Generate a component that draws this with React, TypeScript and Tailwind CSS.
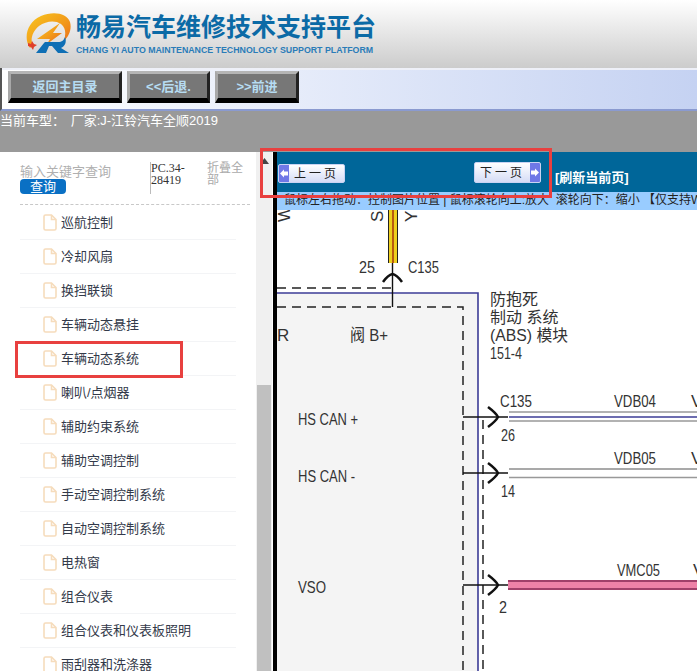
import React from "react";

const cjk = "font-['Liberation_Sans','Noto_Sans_CJK_SC',sans-serif]";

const menuItems = [
  "巡航控制",
  "冷却风扇",
  "换挡联锁",
  "车辆动态悬挂",
  "车辆动态系统",
  "喇叭/点烟器",
  "辅助约束系统",
  "辅助空调控制",
  "手动空调控制系统",
  "自动空调控制系统",
  "电热窗",
  "组合仪表",
  "组合仪表和仪表板照明",
  "雨刮器和洗涤器",
];

const Logo = () => (
  <svg width="50" height="42" viewBox="0 0 50 42" className="shrink-0">
    <defs>
      <linearGradient id="ring" x1="0" y1="0" x2="1" y2="1">
        <stop offset="0" stopColor="#f8c81e" />
        <stop offset="0.55" stopColor="#f29a1a" />
        <stop offset="1" stopColor="#e8641a" />
      </linearGradient>
    </defs>
    {/* swoosh ring */}
    <path d="M6 36C-1 26 3 10 17 4C29-1 43 1 46 10c2 7-1 14-6 19 2-7 2-13-3-17-6-4-15-3-22 2C8 20 6 28 9 33z" fill="url(#ring)" />
    {/* bolt */}
    <path d="M13 27L36 11l-7 10h9L23 32l3-5z" fill="url(#ring)" />
    <path d="M4 31l3 1 1-3 2 3 3 1-3 2-1 3-2-3-3-1z" fill="#e0402a" />
    {/* blue mark */}
    <path d="M21 30h13c4 0 6-2 7-5 2 5 0 9-4 11l8 5H34l-6-7-3 0-3 7H12l8-10z" fill="#0f6fb5" />
  </svg>
);

const FileIcon = () => (
  <svg width="14" height="17" viewBox="0 0 14 17" className="shrink-0" fill="none" stroke="#f6dcbc" strokeWidth="1.6">
    <path d="M2.5 1h6l4.5 4.5V14.5a1.5 1.5 0 0 1-1.5 1.5h-9A1.5 1.5 0 0 1 1 14.5V2.5A1.5 1.5 0 0 1 2.5 1z" />
    <path d="M8.5 1v4.5H13" />
  </svg>
);

const NavButton = ({ label, width }: { label: string; width: string }) => (
  <button
    className={`${width} h-[32px] bg-[#777777] border-t-[3px] border-l-[3px] border-b-[5px] border-r-[3px] border-t-[#b5b5b5] border-l-[#a8a8a8] border-b-black border-r-[#222222] text-[13px] font-bold text-[#b6dcf2] leading-none`}
  >
    {label}
  </button>
);

const Arrow = ({ dir }: { dir: "left" | "right" }) => (
  <span className="w-[10px] self-stretch bg-[#6f78e6] flex items-center justify-center">
    <svg width="8" height="9" viewBox="0 0 8 9" fill="#fff">
      {dir === "left" ? <path d="M0 4.5L4 .5v2h4v4H4v2z" /> : <path d="M8 4.5L4 .5v2H0v4h4v2z" />}
    </svg>
  </span>
);

const PageButton = ({ label, dir, className }: { label: string; dir: "left" | "right"; className: string }) => (
  <button
    className={`${className} w-[67px] flex items-center rounded-[2px] border border-[#c9d3f3] bg-gradient-to-b from-white to-[#d5dcf6] text-[12px] text-[#222] overflow-hidden`}
  >
    {dir === "left" && <Arrow dir="left" />}
    <span className="flex-1 tracking-[3px] text-center">{label}</span>
    {dir === "right" && <Arrow dir="right" />}
  </button>
);

const Chevron = ({ x, y }: { x: number; y: number }) => (
  <path d={`M${x} ${y - 10}q8 6 10 10q-2 4-10 10`} fill="none" stroke="#111" strokeWidth="2.5" />
);

// wiring diagram, coordinates are the page's own
const Diagram = () => {
  const narrow = { fontFamily: "'Liberation Sans','Noto Sans CJK SC',sans-serif", fill: "#333" };
  return (
    <svg width="420" height="461" viewBox="277 210 420 461" className="block bg-white" style={narrow}>
      <rect x="277" y="293" width="201" height="378" fill="#f4f4f4" />
      <path d="M277 293H478V671" fill="none" stroke="#3c3c96" strokeWidth="1.6" />
      <path d="M277 288H392" stroke="#222" strokeWidth="1.5" strokeDasharray="9 6" />
      <path d="M277 307H463V671" fill="none" stroke="#222" strokeWidth="1.5" strokeDasharray="9 6" />
      <path d="M483 420V671" stroke="#222" strokeWidth="1.5" strokeDasharray="9 6" />

      {/* top wire */}
      <rect x="388" y="210" width="10" height="53" fill="#222" />
      <rect x="389" y="210" width="8" height="53" fill="#eecf1e" />
      <rect x="392" y="210" width="2" height="53" fill="#b85a10" />
      <path d="M392.5 263V307" stroke="#111" strokeWidth="1.4" />
      <path d="M383 282q5-7 9.500-8q4.500 1 9.500 8" fill="none" stroke="#111" strokeWidth="2.500" />
      <text x="359" y="273" fontSize="17" textLength="16" lengthAdjust="spacingAndGlyphs">25</text>
      <text x="408" y="273" fontSize="17" textLength="31" lengthAdjust="spacingAndGlyphs">C135</text>
      <text transform="translate(290 222) rotate(-90)" fontSize="17">W</text>
      <text transform="translate(383 222) rotate(-90)" fontSize="17">S</text>
      <text transform="translate(417 222) rotate(-90)" fontSize="17">Y</text>

      <text x="490" y="305" fontSize="16">防抱死</text>
      <text x="490" y="323" fontSize="16">制动 系统</text>
      <text x="490" y="341" fontSize="16" textLength="78" lengthAdjust="spacingAndGlyphs">(ABS) 模块</text>
      <text x="490" y="359" fontSize="17" textLength="32" lengthAdjust="spacingAndGlyphs">151-4</text>

      <text x="277" y="341" fontSize="17">R</text>
      <text x="350" y="341" fontSize="17" textLength="38" lengthAdjust="spacingAndGlyphs">阀 B+</text>
      <text x="298" y="425" fontSize="17" textLength="60" lengthAdjust="spacingAndGlyphs">HS CAN +</text>
      <text x="298" y="482" fontSize="17" textLength="57" lengthAdjust="spacingAndGlyphs">HS CAN -</text>
      <text x="298" y="593" fontSize="17" textLength="28" lengthAdjust="spacingAndGlyphs">VSO</text>

      {/* HS CAN + */}
      <path d="M463 417H508" stroke="#111" strokeWidth="1.300" />
      <Chevron x={488} y={417} />
      <path d="M509 412H697M509 421H697" stroke="#999" strokeWidth="1.500" />
      <path d="M509 417H697" stroke="#3c3c96" strokeWidth="1.600" />
      <text x="500" y="407" fontSize="17" textLength="32" lengthAdjust="spacingAndGlyphs">C135</text>
      <text x="501" y="441" fontSize="17" textLength="14" lengthAdjust="spacingAndGlyphs">26</text>
      <text x="614" y="407" fontSize="17" textLength="42" lengthAdjust="spacingAndGlyphs">VDB04</text>
      <text x="691" y="407" fontSize="17">V</text>

      {/* HS CAN - */}
      <path d="M463 473H508" stroke="#111" strokeWidth="1.300" />
      <Chevron x={488} y={473} />
      <path d="M509 469H697" stroke="#555" strokeWidth="1.200" />
      <path d="M509 477.500H697" stroke="#999" strokeWidth="1.500" />
      <text x="501" y="497" fontSize="17" textLength="14" lengthAdjust="spacingAndGlyphs">14</text>
      <text x="614" y="464" fontSize="17" textLength="42" lengthAdjust="spacingAndGlyphs">VDB05</text>
      <text x="691" y="464" fontSize="17">V</text>

      {/* VSO */}
      <path d="M463 585H508" stroke="#111" strokeWidth="1.300" />
      <Chevron x={488} y={585} />
      <rect x="508" y="580" width="189" height="10" fill="#a0406a" />
      <rect x="508" y="582" width="189" height="6" fill="#ee82a8" />
      <text x="499" y="613" fontSize="17" textLength="8" lengthAdjust="spacingAndGlyphs">2</text>
      <text x="617" y="576" fontSize="17" textLength="43" lengthAdjust="spacingAndGlyphs">VMC05</text>
      <text x="693" y="576" fontSize="17">V</text>
    </svg>
  );
};

export default function App() {
  return (
    <div className={`${cjk} relative w-[697px] h-[671px] overflow-hidden bg-white`}>
      {/* header */}
      <header className="h-[68px] flex items-start gap-[2px] pl-[24px] pt-[12px] bg-gradient-to-b from-white to-[#cccccc]">
        <Logo />
        <div className="pt-[1px]">
          <div className="text-[25px] leading-[28px] font-bold text-[#0b6aa6] whitespace-nowrap">畅易汽车维修技术支持平台</div>
          <div className="mt-[3px] text-[8.8px] leading-[12px] font-bold text-[#2a7cb8] whitespace-nowrap">CHANG YI AUTO MAINTENANCE TECHNOLOGY SUPPORT PLATFORM</div>
        </div>
      </header>

      {/* nav buttons */}
      <nav className="h-[43px] flex items-start gap-[5px] pt-[3px] pl-[6px] border-l-2 border-l-[#555] border-b-2 border-b-[#8a9ad0] bg-gradient-to-r from-white to-[#c5d2f2] shadow-[inset_0_2px_0_#eef0f8]">
        <NavButton label="返回主目录" width="w-[114px]" />
        <NavButton label="<<后退." width="w-[83px]" />
        <NavButton label=">>前进" width="w-[84px]" />
      </nav>

      {/* current model */}
      <div className="h-[41px] pt-[1px] bg-[#999999] text-[13px] leading-[18px] text-white whitespace-nowrap">
        当前车型： <span className="ml-[2px]">厂家:J-江铃汽车全顺2019</span>
      </div>

      <main className="flex h-[519px]">
        {/* sidebar */}
        <aside className="w-[256px] shrink-0 overflow-hidden pl-[20px]">
          <div className="w-[230px] h-[53px] flex border-b border-dashed border-[#c8c8c8]">
            <div className="w-[130px] pt-[13px]">
              <div className="text-[13px] leading-[14px] text-[#b0b0b0] whitespace-nowrap">输入关键字查询</div>
              <button className="block w-[46px] h-[15px] rounded-[4px] bg-[#0a70c4] text-[13px] leading-[15px] text-white">查询</button>
            </div>
            <div className="h-[32px] mt-[10px] w-[56px] border-l border-[#bbbbbb] font-['Liberation_Serif',serif] text-[12px] leading-[12px] text-[#333]">PC.34-<br />28419</div>
            <div className="w-[38px] ml-[1px] pt-[10px] text-[12px] leading-[12px] text-[#aaaaaa]">折叠全部</div>
          </div>
          <ul className="w-[216px] pt-[1px]">
            {menuItems.map((name) => (
              <li key={name} className="h-[34px] flex items-center gap-[4px] pl-[23px] border-b border-[#f3f4f6] text-[13px] text-[#333a4a] whitespace-nowrap">
                <FileIcon />
                {name}
              </li>
            ))}
          </ul>
        </aside>

        {/* scroll bar */}
        <div className="w-[16px] shrink-0 bg-[#f0f0f0] flex flex-col items-center">
          <svg width="9" height="6" viewBox="0 0 9 6" className="mt-[6px]" fill="#444"><path d="M4.500 0L9 6H0z" /></svg>
          <div className="mt-[221px] w-[14px] flex-1 bg-[#c0c0c0]" />
        </div>
        <div className="w-[1px] shrink-0 bg-white" />
        <div className="w-[4px] shrink-0 bg-black" />

        {/* page content */}
        <section className="flex-1 min-w-0 overflow-hidden">
          <div className="h-[40px] bg-[#006699] flex items-start pl-[1px]">
            <PageButton label="上一页" dir="left" className="mt-[12px] h-[19px]" />
            <PageButton label="下一页" dir="right" className="mt-[10px] h-[21px] ml-[129px]" />
            <span className="ml-[14px] mt-[17px] text-[13px] leading-[18px] font-bold text-white whitespace-nowrap">[刷新当前页]</span>
          </div>
          <div className="h-[18px] bg-[#99ccff] pl-[7px] text-[12px] leading-[17px] text-[#222] whitespace-nowrap">鼠标左右拖动：控制图片位置 | 鼠标滚轮向上:放大&nbsp; 滚轮向下：缩小 【仅支持WIN7及以上系统】</div>
          <Diagram />
        </section>
      </main>

      {/* red annotation boxes */}
      <div className="absolute left-[260px] top-[148px] w-[292px] h-[50px] border-[3px] border-[#e8403f]" />
      <div className="absolute left-[15px] top-[341px] w-[168px] h-[37px] border-[3px] border-[#e8403f]" />
    </div>
  );
}
